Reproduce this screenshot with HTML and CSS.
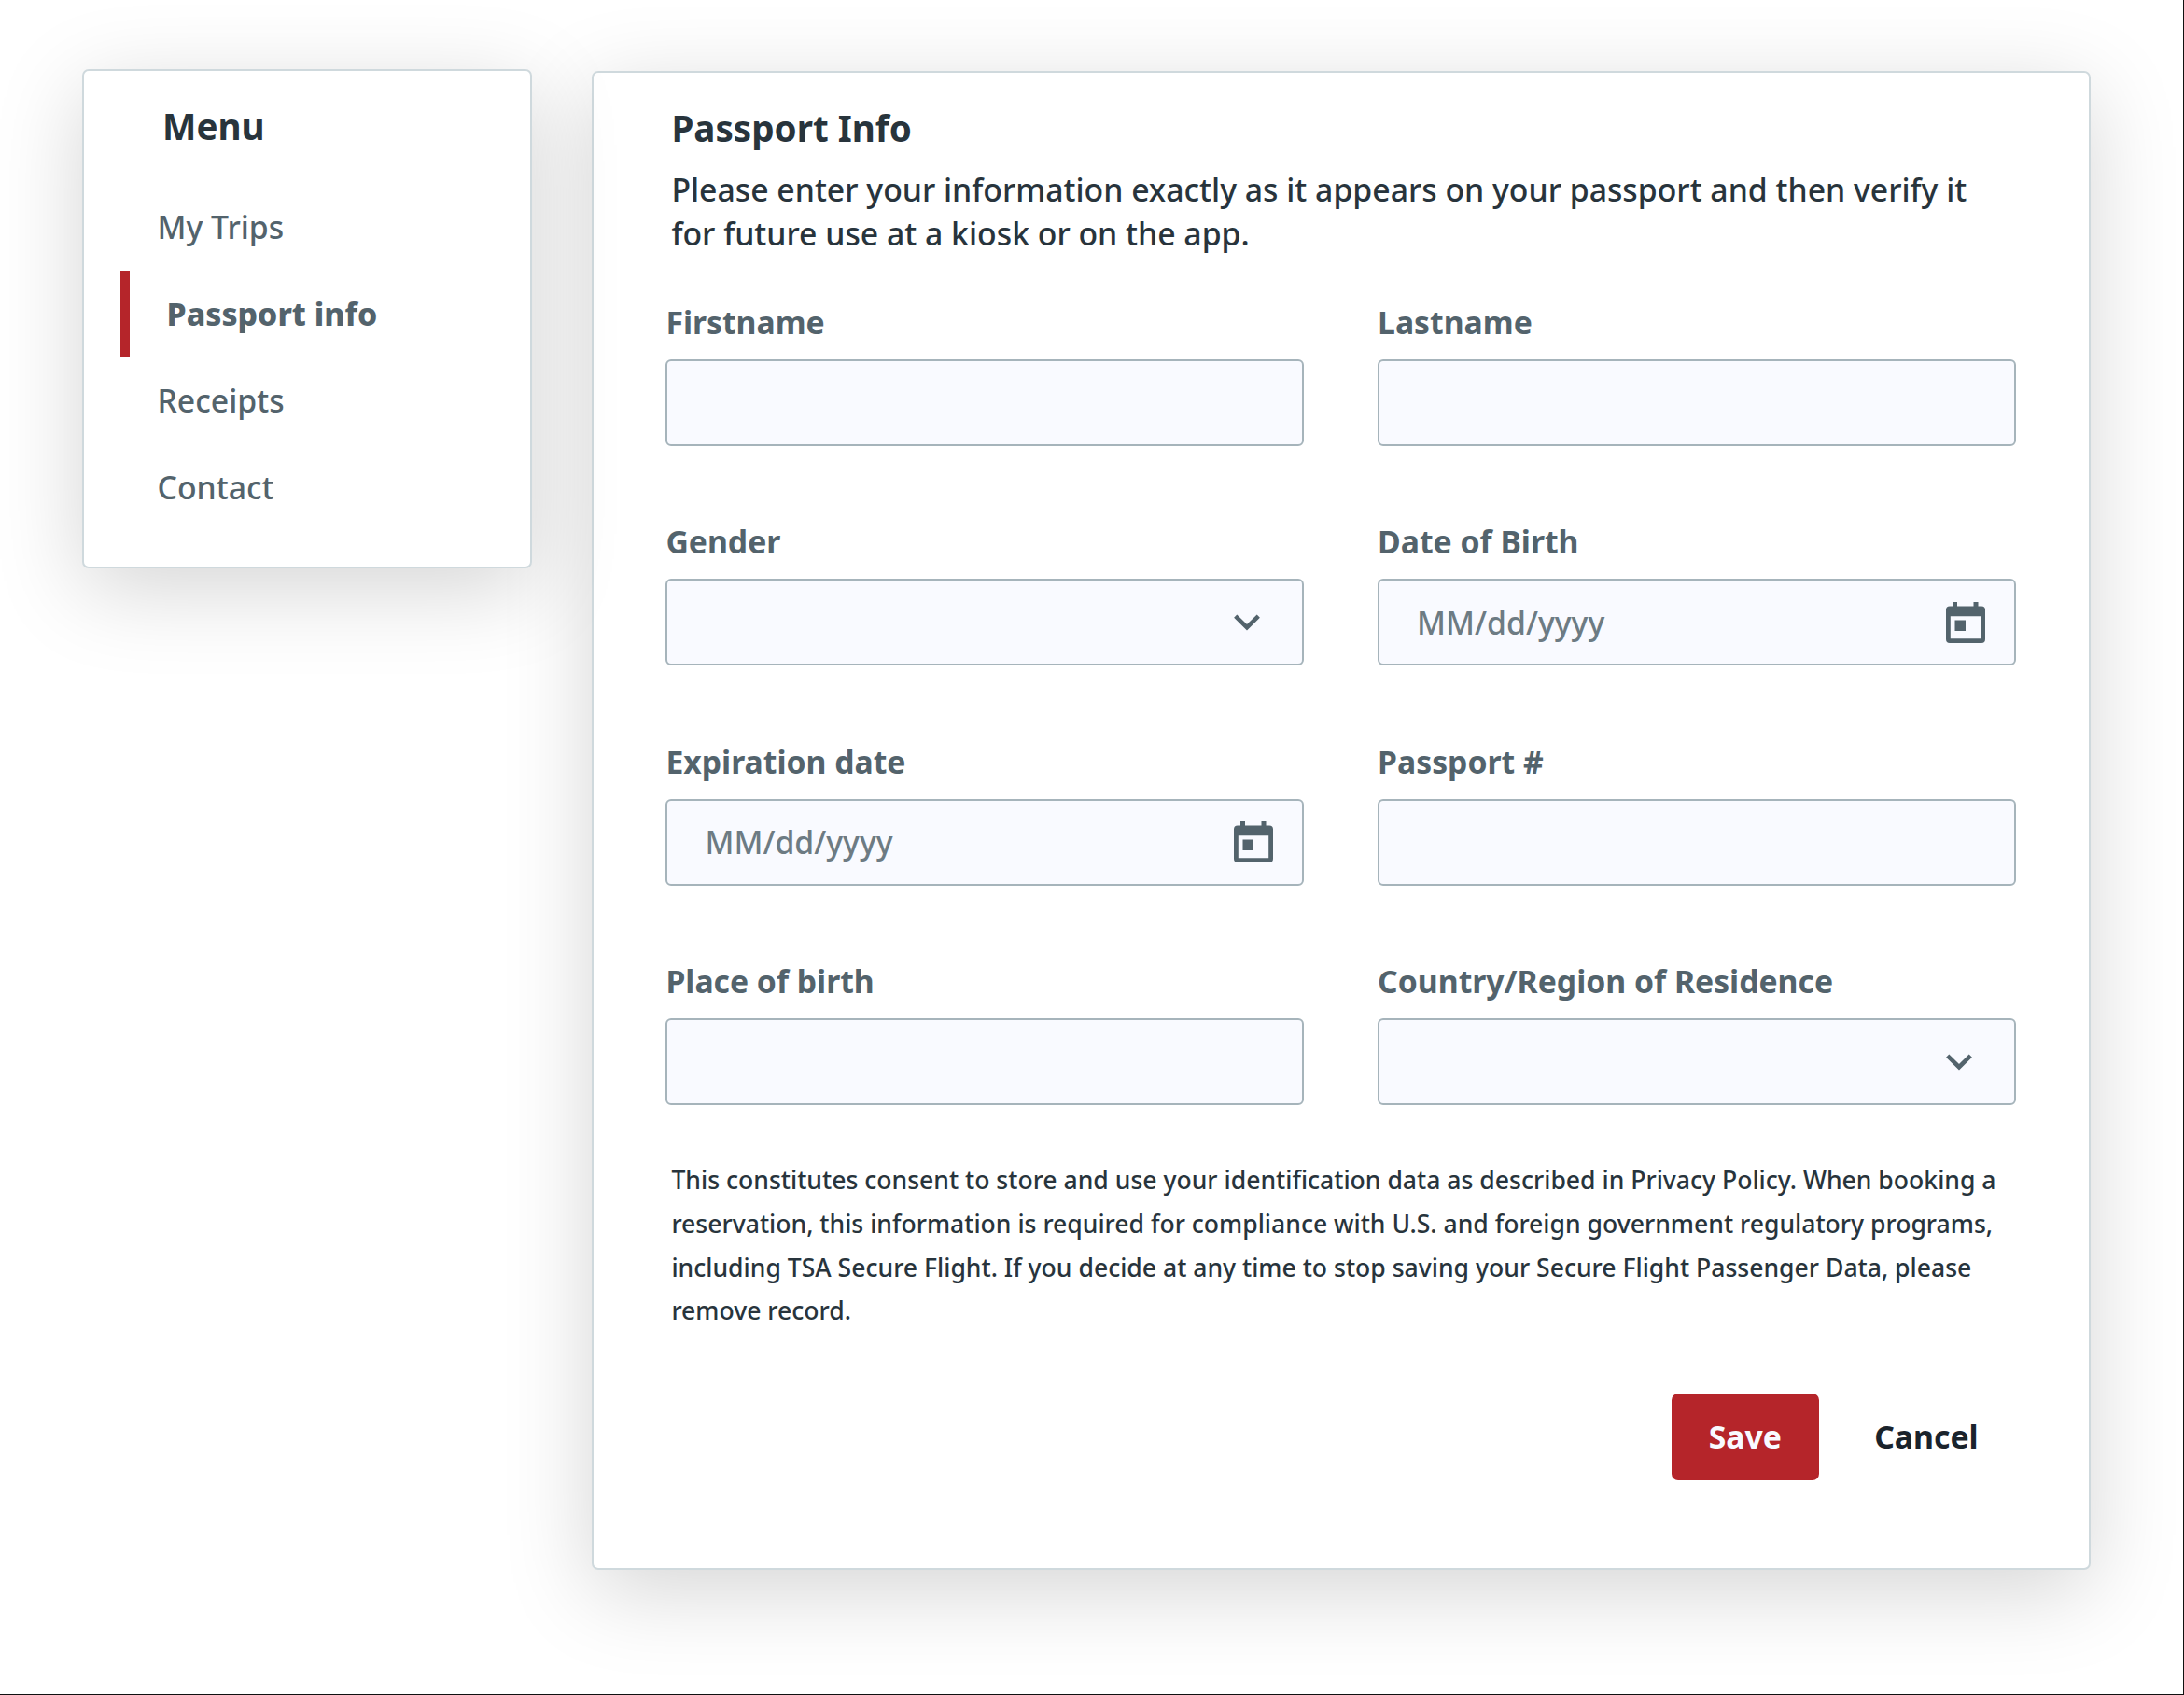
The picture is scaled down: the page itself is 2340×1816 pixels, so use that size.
FILE: index.html
```html
<!DOCTYPE html>
<html lang="en">
<head>
<meta charset="utf-8">
<title>Passport Info</title>
<link rel="stylesheet" href="styles.css">
</head>
<body>
<div class="page">
  <nav class="card menu">
    <h2 class="menu-title">Menu</h2>
    <ul class="menu-list">
      <li class="menu-item">My Trips</li>
      <li class="menu-item menu-item-active">Passport info</li>
      <li class="menu-item">Receipts</li>
      <li class="menu-item">Contact</li>
    </ul>
  </nav>
  <main class="card panel">
    <header class="intro">
      <h1 class="panel-title">Passport Info</h1>
      <p class="lead">Please enter your information exactly as it appears on your passport and then verify it<br>for future use at a kiosk or on the app.</p>
    </header>
    <form class="form">
      <div class="fields">
        <div class="field"><span class="label">Firstname</span><div class="input"></div></div>
        <div class="field"><span class="label">Lastname</span><div class="input"></div></div>
        <div class="field"><span class="label">Gender</span><div class="input input-select">
          <svg class="chevron" viewBox="0 0 28 18"><path d="M1.700 2.200 14 14.200 26.300 2.200" fill="none" stroke="currentColor" stroke-width="4.600"/></svg></div></div>
        <div class="field"><span class="label">Date of Birth</span><div class="input input-date"><span class="placeholder">MM/dd/yyyy</span>
          <svg class="calendar" viewBox="0 0 42 44"><path fill-rule="evenodd" d="M7 0h5v4.500h17.500V0h5v4.500H38a4 4 0 0 1 4 4V40a4 4 0 0 1-4 4H4a4 4 0 0 1-4-4V8.500a4 4 0 0 1 4-4h3zM4.800 15.300v24h32.400v-24zM9.500 19.500H21V31H9.500z"/></svg></div></div>
        <div class="field"><span class="label">Expiration date</span><div class="input input-date"><span class="placeholder">MM/dd/yyyy</span>
          <svg class="calendar" viewBox="0 0 42 44"><path fill-rule="evenodd" d="M7 0h5v4.500h17.500V0h5v4.500H38a4 4 0 0 1 4 4V40a4 4 0 0 1-4 4H4a4 4 0 0 1-4-4V8.500a4 4 0 0 1 4-4h3zM4.800 15.300v24h32.400v-24zM9.500 19.500H21V31H9.500z"/></svg></div></div>
        <div class="field"><span class="label">Passport #</span><div class="input"></div></div>
        <div class="field"><span class="label">Place of birth</span><div class="input"></div></div>
        <div class="field"><span class="label">Country/Region of Residence</span><div class="input input-select">
          <svg class="chevron" viewBox="0 0 28 18"><path d="M1.700 2.200 14 14.200 26.300 2.200" fill="none" stroke="currentColor" stroke-width="4.600"/></svg></div></div>
      </div>
      <p class="consent">This constitutes consent to store and use your identification data as described in Privacy Policy. When booking a<br>reservation, this information is required for compliance with U.S. and foreign government regulatory programs,<br>including TSA Secure Flight. If you decide at any time to stop saving your Secure Flight Passenger Data, please<br>remove record.</p>
      <div class="actions">
        <button type="button" class="button button-primary">Save</button>
        <button type="button" class="button button-plain">Cancel</button>
      </div>
    </form>
  </main>
</div>
</body>
</html>
```
FILE: styles.css
```css
* { box-sizing: border-box; }

body {
  margin: 0;
  background: #fff;
  font-family: "Noto Sans", sans-serif;
  font-size: 33.78px;
  font-weight: 500;
  color: #28343c;
}

.page {
  display: flex;
  align-items: flex-start;
  gap: 64px;
  width: 2340px;
  height: 1816px;
  padding: 74px 0 0 88px;
  border-right: 1px solid #111;
  border-bottom: 1px solid #111;
  overflow: hidden;
}

.card {
  flex: none;
  background: #fff;
  border: 2px solid #cfd9dd;
  border-radius: 7px;
  box-shadow: 0 22px 95px rgba(0, 0, 0, 0.17);
}

.menu {
  position: relative;
  z-index: 1;
  width: 482px;
  height: 535px;
  padding: 31px 39px 0;
}

.menu-title {
  margin: 0 0 0 45px;
  font-size: 38.6px;
  line-height: 56px;
  font-weight: 700;
}

.menu-list {
  margin: 34px 0 0;
  padding: 0;
  list-style: none;
}

.menu-item {
  height: 93.1px;
  padding-left: 39.5px;
  line-height: 92px;
  color: #53636c;
}

.menu-item-active {
  border-left: 10px solid #b5252a;
  font-weight: 800;
}

.panel {
  width: 1606px;
  height: 1606px;
  margin-top: 2px;
  padding: 31px 77.4px 0;
}

.intro { padding-left: 6px; }

.panel-title {
  margin: 0;
  font-size: 38.6px;
  line-height: 56px;
  font-weight: 700;
}

.lead {
  margin: 15px 0 0;
  line-height: 46.6px;
  white-space: nowrap;
}

.fields {
  display: grid;
  grid-template-columns: 684px 684px;
  column-gap: 78.7px;
  row-gap: 79.2px;
  margin-top: 48.5px;
}

.field {
  display: flex;
  flex-direction: column;
  gap: 17px;
}

.label {
  font-size: 33.72px;
  line-height: 46px;
  font-weight: 700;
  color: #53636c;
}

.input {
  display: flex;
  align-items: center;
  justify-content: space-between;
  height: 93.3px;
  border: 2px solid #a6b4bb;
  border-radius: 6px;
  background: #f9faff;
  color: #53636c;
}

.input-select { justify-content: flex-end; padding-right: 45px; }
.input-date { padding: 0 31px 0 40px; }

.placeholder {
  line-height: 46px;
  color: #6d7b83;
}

.chevron { width: 28px; height: 18px; }
.calendar { width: 42px; height: 44px; fill: currentColor; }

.consent {
  margin: 57px 0 0 6px;
  font-size: 26.57px;
  line-height: 46.6px;
  white-space: nowrap;
}

.actions {
  display: flex;
  justify-content: flex-end;
  margin-top: 65px;
  padding-right: 1.2px;
}

.button {
  height: 93.3px;
  padding: 0 39.8px;
  border: 0;
  border-radius: 7px;
  background: none;
  font: inherit;
  font-weight: 700;
}

.button-primary { background: #b5252a; color: #f9faff; }
.button-plain { margin-left: 19.5px; color: #1a232c; }
```
